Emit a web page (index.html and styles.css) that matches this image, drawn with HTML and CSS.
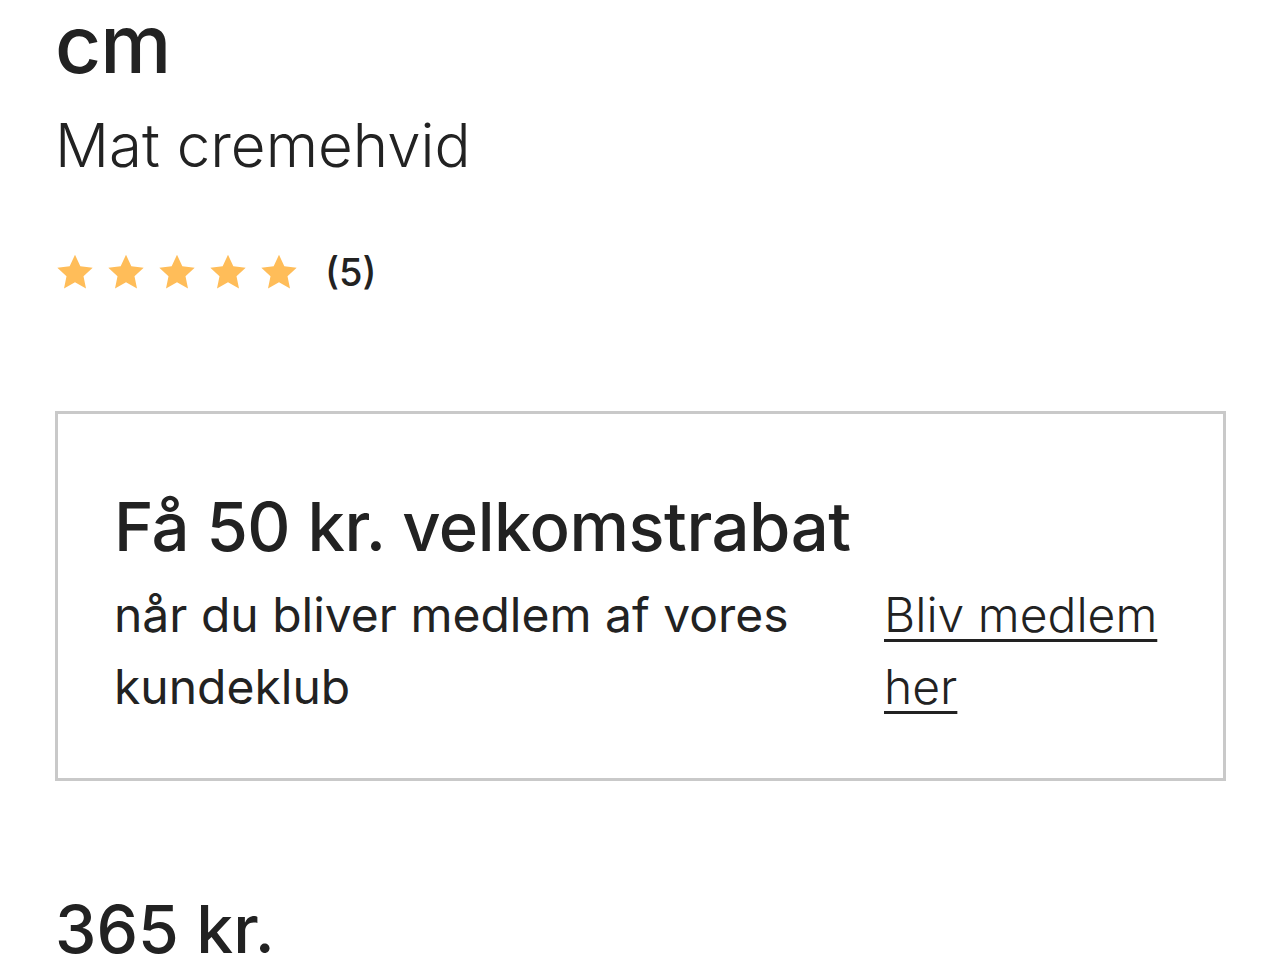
FILE: index.html
```html
<!DOCTYPE html>
<html lang="da">
<head>
<meta charset="utf-8">
<title>Produkt</title>
<link rel="stylesheet" href="styles.css">
</head>
<body>
<main class="page">
  <h1 class="title">cm</h1>
  <p class="variant">Mat cremehvid</p>
  <div class="rating">
    <div class="stars">
      <svg class="star" viewBox="0 0 24 24"><path d="M12 1.6l3.2 6.9 7.4.9-5.5 5.1 1.5 7.4L12 18.2l-6.6 3.7 1.5-7.4L1.4 9.4l7.4-.9z"/></svg>
      <svg class="star" viewBox="0 0 24 24"><path d="M12 1.6l3.2 6.9 7.4.9-5.5 5.1 1.5 7.4L12 18.2l-6.6 3.7 1.5-7.4L1.4 9.4l7.4-.9z"/></svg>
      <svg class="star" viewBox="0 0 24 24"><path d="M12 1.6l3.2 6.9 7.4.9-5.5 5.1 1.5 7.4L12 18.2l-6.6 3.7 1.5-7.4L1.4 9.4l7.4-.9z"/></svg>
      <svg class="star" viewBox="0 0 24 24"><path d="M12 1.6l3.2 6.9 7.4.9-5.5 5.1 1.5 7.4L12 18.2l-6.6 3.7 1.5-7.4L1.4 9.4l7.4-.9z"/></svg>
      <svg class="star" viewBox="0 0 24 24"><path d="M12 1.6l3.2 6.9 7.4.9-5.5 5.1 1.5 7.4L12 18.2l-6.6 3.7 1.5-7.4L1.4 9.4l7.4-.9z"/></svg>
    </div>
    <span class="count">(5)</span>
  </div>
  <section class="promo">
    <h2 class="promo-title">Få 50 kr. velkomstrabat</h2>
    <div class="promo-row">
      <p class="promo-text">når du bliver medlem af vores kundeklub</p>
      <a class="promo-link" href="#">Bliv medlem her</a>
    </div>
  </section>
  <p class="price">365 kr.</p>
</main>
</body>
</html>
```

FILE: styles.css
```css
html, body {
  margin: 0;
  padding: 0;
  background: #ffffff;
}
body {
  font-family: Inter, "Noto Sans", sans-serif;
  color: #222222;
}
.page {
  padding: 0 54px 0 55px;
  display: flex;
  flex-direction: column;
}
.title {
  margin: -6px 0 0 0;
  font-size: 80px;
  font-weight: 500;
  line-height: 100px;
  letter-spacing: -1px;
}
.variant {
  margin: 0;
  font-size: 60px;
  font-weight: 300;
  line-height: 90px;
  padding-top: 6px;
}
.rating {
  display: flex;
  align-items: center;
  margin-top: 52px;
  height: 60px;
  gap: 26px;
}
.stars {
  display: flex;
  gap: 11px;
}
.star {
  width: 40px;
  height: 40px;
  fill: #ffbd59;
  display: block;
}
.count {
  font-size: 38px;
  font-weight: 500;
}
.promo {
  margin-top: 109px;
  border: 3px solid #c9c9c9;
  padding: 71px 56px 55px 56px;
}
.promo-title {
  margin: 0;
  font-size: 67px;
  font-weight: 500;
  line-height: 84px;
  letter-spacing: -0.5px;
}
.promo-row {
  display: flex;
  gap: 50px;
  margin-top: 10px;
}
.promo-text {
  flex: 1;
  margin: 0;
  font-size: 48px;
  line-height: 72px;
  font-weight: 400;
}
.promo-link {
  flex: 0 0 283px;
  font-size: 48px;
  line-height: 72px;
  font-weight: 300;
  color: #222222;
  text-decoration: underline;
  text-decoration-thickness: 3px;
  text-underline-offset: 7px;
}
.price {
  margin: 108px 0 0 0;
  font-size: 66px;
  font-weight: 500;
  line-height: 80px;
}
```
